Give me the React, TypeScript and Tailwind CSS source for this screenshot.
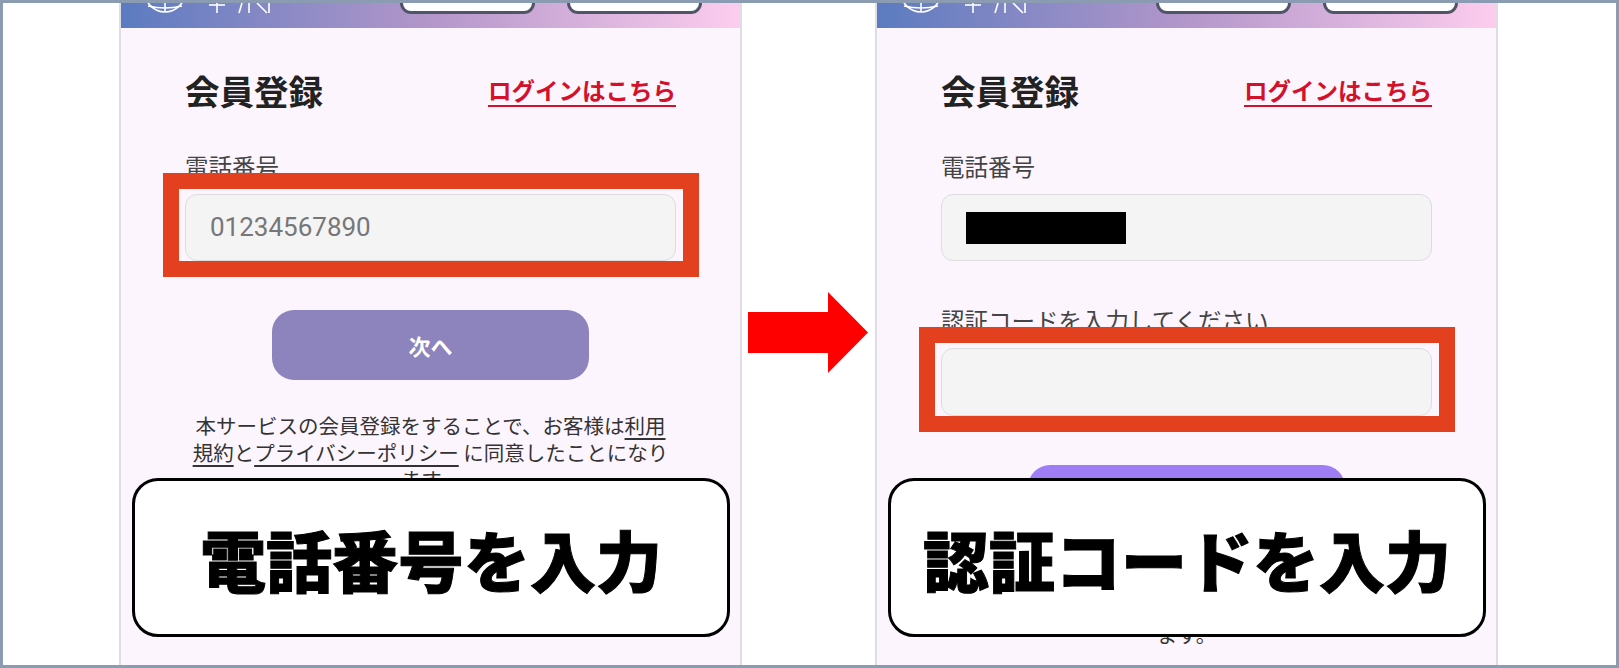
import React from 'react';

const jp = "font-['Noto_Sans_CJK_JP','Noto_Sans',sans-serif]";

const Header: React.FC = () => (
  <div className="flex h-[25px] items-start justify-between overflow-hidden bg-linear-to-r from-[#5b7bc0] via-[#b396ca] to-[#fdcdee] pr-[38px]">
    {/* logo, cut off by the top of the screenshot */}
    <svg width="160" height="25" viewBox="0 0 160 25" fill="none" stroke="white" strokeWidth="1.6">
      <circle cx="44" cy="-11" r="20" />
      <path d="M27 3 Q44 7 61 3" />
      <path d="M44 -11 L44 9" />
      <path d="M96 0 L96 10" />
      <path d="M88 2 L104 2" />
      <path d="M121 0 L118 10" />
      <path d="M128 0 L128 10" />
      <path d="M136 0 L146 10" />
      <path d="M148 0 L148 10" />
    </svg>
    <div className="flex gap-[32px]">
      <div className="h-[11px] w-[135px] rounded-b-[12px] border-[3px] border-t-0 border-[#4f5566] bg-white" />
      <div className="h-[11px] w-[135px] rounded-b-[12px] border-[3px] border-t-0 border-[#4f5566] bg-white" />
    </div>
  </div>
);

const Field: React.FC<{ highlight?: boolean; children?: React.ReactNode; h?: string }> = ({ highlight, children, h = 'h-[67px]' }) => (
  <div className={`relative mt-[13px] ${h}`}>
    <div className="flex h-full items-center rounded-[12px] border-[1.5px] border-[#dcdcdf] bg-[#f4f4f5] pl-[24px]">
      {children}
    </div>
    {highlight && (
      <div className="absolute -top-[21px] -right-[23px] -bottom-[16px] -left-[22px] border-[16px] border-[#e3401f]" />
    )}
  </div>
);

const Terms: React.FC = () => (
  <p className="mt-[32px] text-center text-[20.5px] leading-[27px] text-[#333]">
    本サービスの会員登録をすることで、お客様は<span className="underline underline-offset-4">利用</span>
    <br />
    <span className="underline underline-offset-4">規約</span>と<span className="underline underline-offset-4">プライバシーポリシー</span> に同意したことになり
    <br />
    ます。
  </p>
);

const Caption: React.FC<{ text: string }> = ({ text }) => (
  <div className="absolute top-[475px] left-[11px] flex h-[159px] w-[598px] items-center justify-center rounded-[26px] border-[3px] border-black bg-white">
    <span className="text-[66px] leading-none font-black text-black [-webkit-text-stroke:1px_black]">{text}</span>
  </div>
);

const Panel: React.FC<{ step: 1 | 2 }> = ({ step }) => (
  <div className={`relative h-full w-[623px] shrink-0 overflow-hidden border-x-2 border-[#dedde3] bg-[#fdf5fd] ${jp}`}>
    <Header />
    <div className="px-[64px]">
      <div className="mt-[42px] flex h-[40px] items-center justify-between">
        <h1 className="text-[34.5px] leading-[40px] font-bold text-[#222]">会員登録</h1>
        <a className="text-[23.5px] leading-[40px] font-bold text-[#d4102b] underline decoration-2 underline-offset-[5px]">ログインはこちら</a>
      </div>
      <div className="mt-[41px] text-[23.5px] leading-[30px] text-[#444]">電話番号</div>
      <Field highlight={step === 1}>
        {step === 1 ? (
          <span className="font-['Roboto',sans-serif] text-[26px] text-[#777]">01234567890</span>
        ) : (
          <div className="h-[32px] w-[160px] bg-black" />
        )}
      </Field>
      {step === 2 && (
        <>
          <div className="mt-[44px] text-[23.5px] leading-[30px] text-[#444]">認証コードを入力してください</div>
          <Field highlight h="h-[68px]" />
        </>
      )}
      <button
        className={`mx-auto mt-[49px] flex h-[70px] w-[317px] items-center justify-center rounded-[22px] text-[22px] font-bold text-white ${
          step === 1 ? 'bg-[#8d83bd]' : 'bg-[#9f7ef5]'
        }`}
      >
        {step === 1 ? '次へ' : '認証する'}
      </button>
      <Terms />
    </div>
    <Caption text={step === 1 ? '電話番号を入力' : '認証コードを入力'} />
  </div>
);

export default function App() {
  return (
    <div className="h-[668px] w-[1619px] bg-[#8a9bb2] p-[3px]">
      <div className="flex h-full bg-white pl-[116px]">
        <Panel step={1} />
        <div className="w-[133px] shrink-0">
          <svg className="mt-[289px] ml-[6px]" width="120" height="81" viewBox="0 0 120 81">
            <polygon points="0,20 80,20 80,0 120,40.5 80,81 80,61 0,61" fill="#ff0000" />
          </svg>
        </div>
        <Panel step={2} />
      </div>
    </div>
  );
}
